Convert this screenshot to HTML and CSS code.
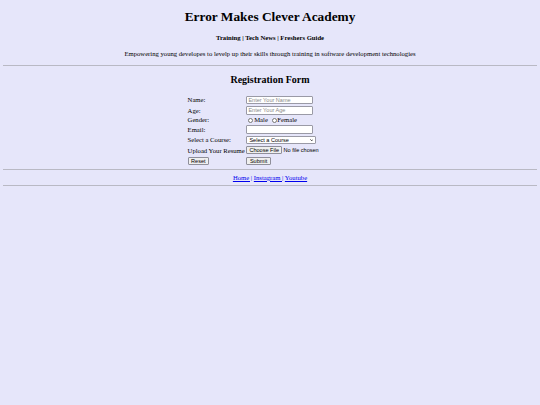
FILE: index.html
```html
<!DOCTYPE html>
<html lang="en">
<head>
<meta charset="utf-8">
<title>Error Makes Clever Academy</title>
<link rel="stylesheet" href="styles.css">
</head>
<body>
<header class="masthead">
  <h1 class="title">Error Makes Clever Academy</h1>
  <h4 class="nav">Training | Tech News | Freshers Guide</h4>
  <p class="tagline">Empowering young developes to levelp up their skills through training in software development technologies</p>
</header>
<hr class="rule">
<main class="register">
  <h2 class="form-title">Registration Form</h2>
  <form class="reg-form">
    <table class="form-table">
      <tr><td>Name:</td><td><input class="field" type="text" placeholder="Enter Your Name"></td></tr>
      <tr><td>Age:</td><td><input class="field" type="text" placeholder="Enter Your Age"></td></tr>
      <tr><td>Gender:</td><td><input class="radio" type="radio" name="g" id="m"><label for="m">Male</label> <input class="radio" type="radio" name="g" id="f"><label for="f">Female</label></td></tr>
      <tr><td>Email:</td><td><input class="field" type="email"></td></tr>
      <tr><td>Select a Course:</td><td><span class="select-wrap"><select class="field course"><option>Select a Course</option><option>Full Stack</option><option>Python</option></select><svg class="chev" viewBox="0 0 10 6"><path d="M1 1l4 4 4-4" fill="none" stroke="#000" stroke-width="2"/></svg></span></td></tr>
      <tr><td>Upload Your Resume</td><td><input class="file" type="file"></td></tr>
      <tr><td><input class="btn reset" type="reset" value="Reset"></td><td><input class="btn submit" type="submit" value="Submit"></td></tr>
    </table>
  </form>
</main>
<hr class="rule">
<footer class="links"><a href="#">Home |</a> <a href="#">Instagram |</a> <a href="#">Youtube</a></footer>
<hr class="rule">
</body>
</html>
```

FILE: styles.css
```css
html {
  background: #e6e6fa;
}
body {
  margin: 3.33px;
  font-family: "Liberation Serif", "Times New Roman", serif;
  font-size: 6.67px;
  color: #000;
  background: #e6e6fa;
}
.masthead {
  text-align: center;
}
.title {
  font-size: 13.33px;
  margin: 5.9px 0 8px;
}
.nav {
  font-size: 6.67px;
  margin: 8.87px 0;
}
.tagline {
  margin: 6.67px 0 7.6px;
}
.rule {
  height: 0;
  margin: 3.33px 0;
  border: none;
  border-top: 1px solid #b9b9c4;
}
.register {
  text-align: center;
}
.form-title {
  font-size: 10px;
  margin: 8.3px 0 9.8px;
}
.reg-form {
  margin: 0;
}
.form-table {
  margin: 0 auto;
  text-align: left;
  border-spacing: 0;
}
.form-table td {
  padding: 0.85px 0.85px;
  vertical-align: middle;
}
.field,
.btn,
.file {
  font-family: "Liberation Sans", Arial, sans-serif;
  font-size: 5.56px;
  box-sizing: border-box;
  margin: 0;
  vertical-align: middle;
}
.field {
  width: 67px;
  height: 8.6px;
  padding: 0 1px;
  border: 1px solid #9a9aa6;
  border-radius: 1px;
  background: #fff;
  color: #000;
}
.field::placeholder {
  color: #8a8a8a;
}
.select-wrap {
  position: relative;
  display: inline-block;
  vertical-align: middle;
}
.course {
  appearance: none;
  -webkit-appearance: none;
  width: 70px;
  height: 8.3px;
  padding: 0 1px 0 2px;
  display: block;
}
.chev {
  position: absolute;
  right: 3px;
  top: 3px;
  width: 3.5px;
  height: 2.2px;
  pointer-events: none;
}
.radio {
  appearance: none;
  -webkit-appearance: none;
  width: 5px;
  height: 5px;
  margin: 0 0.8px 0 2px;
  border: 0.6px solid #777;
  border-radius: 50%;
  background: #fff;
  vertical-align: -0.5px;
  box-sizing: border-box;
}
.file {
  width: 106px;
  height: 8.6px;
  padding: 0;
  border: none;
  background: transparent;
  color: #000;
}
.file::file-selector-button {
  font-family: "Liberation Sans", Arial, sans-serif;
  font-size: 5.56px;
  height: 8.3px;
  padding: 0 2px;
  margin: 0 1.5px 0 0;
  border: 1px solid #8f8f9a;
  border-radius: 1px;
  background: #efefef;
  color: #000;
}
.btn {
  height: 8.3px;
  padding: 0 2.5px;
  border: 1px solid #8f8f9a;
  border-radius: 1px;
  background: #efefef;
  color: #000;
}
.links {
  text-align: center;
  padding: 0.5px 0;
}
.links a {
  color: #0000ee;
}
```
